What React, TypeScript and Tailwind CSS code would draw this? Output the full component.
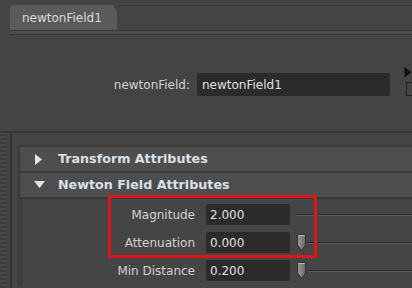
import React from "react";

const font = { fontFamily: "Tahoma, 'DejaVu Sans', sans-serif" };

function Thumb() {
  return (
    <svg width="11" height="17" viewBox="0 0 11 17" className="shrink-0">
      <defs>
        <linearGradient id="tg" x1="0" y1="0" x2="1" y2="0">
          <stop offset="0" stopColor="#9a9a9a" />
          <stop offset="1" stopColor="#6a6a6a" />
        </linearGradient>
      </defs>
      <path d="M1.5 0.5 H9.5 V11 L5.5 16.5 L1.5 11 Z" fill="url(#tg)" stroke="#2e2e2e" />
      <path d="M2.5 1.5 H8.5" stroke="#bdbdbd" />
    </svg>
  );
}

function Slider({ thumb }: { thumb: boolean }) {
  return (
    <div className="flex-1 flex items-center h-full pl-[6px]">
      {thumb && <Thumb />}
      <div className="flex-1 flex flex-col">
        <div className="h-px bg-[#2a2a2a]" />
        <div className="h-px bg-[#5a5a5a]" />
      </div>
    </div>
  );
}

function Row({ label, value, thumb }: { label: string; value: string; thumb: boolean }) {
  return (
    <div className="flex items-center h-[21px]">
      <div className="w-[184px] text-right text-[12px] text-[#d2d2d2] pr-[11px]">{label}</div>
      <div className="w-[84px] h-[21px] bg-[#2b2b2b] rounded-[2px] flex items-center pl-[4px] text-[12px] text-[#e0e0e0]">
        {value}
      </div>
      <Slider thumb={thumb} />
    </div>
  );
}

function Header({ title, open }: { title: string; open: boolean }) {
  return (
    <div className="h-[26px] flex items-center bg-[#4e4e4e] border-b-2 border-[#393939]">
      <div className="w-[38px] flex justify-center">
        {open ? (
          <svg width="11" height="8" viewBox="0 0 11 8"><path d="M0 0 H11 L5.5 7 Z" fill="#e4e4e4" /></svg>
        ) : (
          <svg width="8" height="11" viewBox="0 0 8 11"><path d="M0 0 V11 L7 5.5 Z" fill="#e4e4e4" /></svg>
        )}
      </div>
      <span className="text-[12.7px] font-bold text-[#d9e1ea]">{title}</span>
    </div>
  );
}

export default function App() {
  return (
    <div className="w-[412px] h-[288px] bg-[#444444] overflow-hidden relative flex flex-col" style={font}>
      {/* tab strip */}
      <div className="pt-[5px] pl-[10px]">
        <div className="flex items-end">
          <div className="w-[107px] h-[25px] bg-[#5a5a5a] rounded-tl-[3px] [clip-path:polygon(0_0,96%_0,100%_30%,100%_100%,0_100%)] flex items-center pl-[12px] text-[12px] text-[#dcdcdc]">
            newtonField1
          </div>
          <div className="flex-1 h-[25px] border-t border-[#3a3a3a]" />
        </div>
        <div className="h-px bg-[#363636]" />
        <div className="h-[3px] bg-[#4c4c4c]" />
        <div className="h-px bg-[#363636]" />
      </div>

      {/* node name */}
      <div className="flex items-center mt-[38px] h-[23px]">
        <div className="w-[197px] text-right text-[12px] text-[#d2d2d2] pr-[7px]">newtonField:</div>
        <div className="w-[193px] h-[23px] bg-[#2b2b2b] rounded-[2px] flex items-center pl-[5px] text-[12px] text-[#e2e2e2]">
          newtonField1
        </div>
        <div className="flex-1 flex flex-col items-end self-stretch">
          <svg width="8" height="12" viewBox="0 0 8 12" className="-mt-[6px]"><path d="M0 0 L8 6 L0 12 Z" fill="#111" /></svg>
          <div className="w-[6px] h-[16px] border border-[#1e1e1e] border-r-0 mt-[4px]" />
        </div>
      </div>

      {/* attribute panel */}
      <div className="mt-[35px] flex-1 flex border-t-2 border-[#363636]">
        <div className="w-[7px] bg-[repeating-linear-gradient(0deg,#3c3c3c_0,#3c3c3c_2px,#4a4a4a_2px,#4a4a4a_4px)]" />
        <div className="w-[3px]" />
        <div className="w-[2px] bg-[#333333]" />
        <div className="flex-1 flex flex-col pt-[12px] pl-[6px]">
          <div className="border-t-2 border-l-2 border-[#3a3a3a] flex flex-col">
            <Header title="Transform Attributes" open={false} />
            <Header title="Newton Field Attributes" open />
            <div className="flex flex-col gap-[7px] pt-[5px] pb-[6px] border-l border-[#333333] ml-px bg-[#454545]">
              <Row label="Magnitude" value="2.000" thumb={false} />
              <Row label="Attenuation" value="0.000" thumb />
              <Row label="Min Distance" value="0.200" thumb />
            </div>
          </div>
        </div>
      </div>

      {/* highlight annotation */}
      <div className="absolute left-[108px] top-[195px] w-[209px] h-[63px] border-[3px] border-[#e0141b] pointer-events-none" />
    </div>
  );
}
